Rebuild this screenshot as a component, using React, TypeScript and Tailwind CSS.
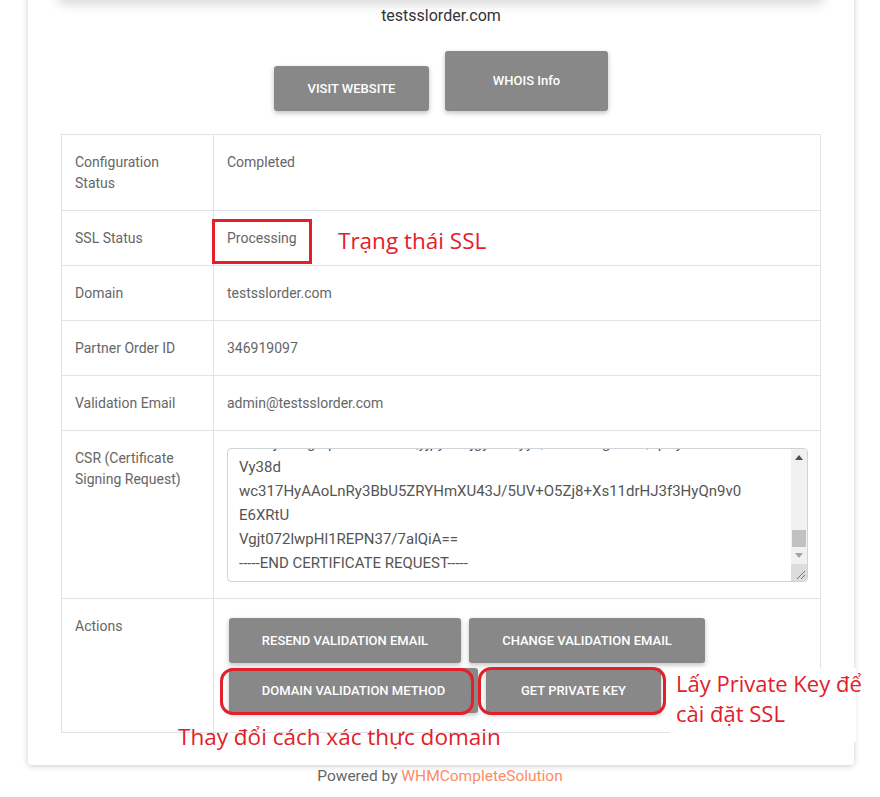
import React from 'react';

const rows: { label: string; value: string; tall?: boolean }[] = [
  { label: 'Configuration Status', value: 'Completed', tall: true },
  { label: 'SSL Status', value: 'Processing' },
  { label: 'Domain', value: 'testsslorder.com' },
  { label: 'Partner Order ID', value: '346919097' },
  { label: 'Validation Email', value: 'admin@testsslorder.com' },
];

const csrLines = [
  'MIIBIjANBgkqhkiG9w0BAQyjpyEFAjgyOCAyyQ8AMIIBCgKCAQEpAy',
  'Vy38d',
  'wc317HyAAoLnRy3BbU5ZRYHmXU43J/5UV+O5Zj8+Xs11drHJ3f3HyQn9v0',
  'E6XRtU',
  'Vgjt072lwpHl1REPN37/7alQiA==',
  '-----END CERTIFICATE REQUEST-----',
];

const GrayButton = ({ children, className = '' }: { children: React.ReactNode; className?: string }) => (
  <button className={`bg-[#888888] text-white text-[13px] font-medium uppercase rounded-[3px] shadow-[0_2px_5px_rgba(0,0,0,0.25)] ${className}`}>
    {children}
  </button>
);

const CsrBox = () => (
  <div className="flex h-[134px] border border-[#cfd4da] rounded-[4px] overflow-hidden">
    <div className="flex-1 overflow-hidden pl-[11px] text-[15px] leading-[24px] text-[#555]">
      <div className="-mt-[18px] whitespace-nowrap">
        {csrLines.map((l, i) => (
          <div key={i}>{l}</div>
        ))}
      </div>
    </div>
    <div className="w-[16px] flex flex-col bg-[#f1f1f1]">
      <div className="h-[17px] flex items-center justify-center">
        <svg width="8" height="5" viewBox="0 0 8 5"><path d="M0 5 L4 0 L8 5 Z" fill="#505050" /></svg>
      </div>
      <div className="flex-1 flex flex-col justify-end px-[1px]">
        <div className="h-[17px] bg-[#c1c1c1]" />
      </div>
      <div className="h-[17px] flex items-center justify-center">
        <svg width="8" height="5" viewBox="0 0 8 5"><path d="M0 0 L8 0 L4 5 Z" fill="#a3a3a3" /></svg>
      </div>
      <div className="h-[17px] bg-[#dcdcdc] flex items-end justify-end p-[2px]">
        <svg width="9" height="9" viewBox="0 0 9 9">
          <path d="M9 1 L1 9 M9 5 L5 9" stroke="#777" strokeWidth="1" />
        </svg>
      </div>
    </div>
  </div>
);

export default function App() {
  const red = 'border-[#e3202a]';
  const cell = 'align-top border border-[#dfe2e6] px-[13px] pt-[17px] pb-[16px]';
  return (
    <div className="relative w-[880px] min-h-[797px] bg-white font-['Roboto',sans-serif] overflow-hidden">
      <div className="mx-[28px] w-[826px] bg-white rounded-b-[4px] shadow-[0_1px_6px_rgba(0,0,0,0.2)] pb-[32px]">
        <div className="h-[20px] -mt-[20px] mx-[31px] rounded-[4px] bg-white shadow-[0_4px_12px_rgba(0,0,0,0.16)]" />
        <div className="pt-[4px] text-center text-[16px] leading-6 text-[#333]">testsslorder.com</div>
        <div className="mt-[23px] flex justify-center items-end gap-4">
          <GrayButton className="w-[155px] h-[45px]">Visit Website</GrayButton>
          <button className="w-[163px] h-[60px] bg-[#888888] text-white text-[13px] font-medium rounded-[3px] shadow-[0_2px_5px_rgba(0,0,0,0.25)]">
            WHOIS Info
          </button>
        </div>
        <table className="mt-[23px] mx-[33px] w-[760px] border-collapse text-[14px] leading-[21px] text-[#666]">
          <tbody>
            {rows.map((r) => (
              <tr key={r.label}>
                <td className={`w-[152px] ${cell}`}>
                  {r.tall ? (
                    <>
                      Configuration
                      <br />
                      Status
                    </>
                  ) : (
                    r.label
                  )}
                </td>
                <td className={cell}>{r.value}</td>
              </tr>
            ))}
            <tr>
              <td className={cell}>
                CSR (Certificate
                <br />
                Signing Request)
              </td>
              <td className="align-top border border-[#dfe2e6] pl-[13px] pr-[12px] pt-[17px] pb-[16px]">
                <CsrBox />
              </td>
            </tr>
            <tr>
              <td className={cell}>Actions</td>
              <td className="align-top border border-[#dfe2e6] px-[13px] pt-[19px] pb-[19px]">
                <div className="ml-[2px] flex flex-wrap gap-x-2 gap-y-[5px]">
                  <GrayButton className="w-[232px] h-[45px]">Resend Validation Email</GrayButton>
                  <GrayButton className="w-[236px] h-[45px]">Change Validation Email</GrayButton>
                  <GrayButton className="w-[249px] h-[45px]">Domain Validation Method</GrayButton>
                  <GrayButton className="w-[175px] h-[45px]">Get Private Key</GrayButton>
                </div>
              </td>
            </tr>
          </tbody>
        </table>
      </div>
      <div className="pt-[1px] text-center text-[15.5px] leading-[20px] text-[#666]">
        Powered by <span className="text-[#fa8c66]">WHMCompleteSolution</span>
      </div>

      {/* screenshot annotations */}
      <div className={`absolute left-[212px] top-[219px] w-[100px] h-[45px] border-[3.5px] ${red}`} />
      <div className="absolute left-[338px] top-[226px] text-[22.5px] leading-[30px] text-[#e3202a] font-['Open_Sans',sans-serif]">
        Trạng thái SSL
      </div>
      <div className={`absolute left-[220px] top-[668px] w-[254px] h-[47px] border-[3.5px] rounded-[13px] ${red}`} />
      <div className={`absolute left-[478px] top-[667px] w-[188px] h-[48px] border-[3.5px] rounded-[13px] ${red}`} />
      <div className="absolute left-[178px] top-[722px] text-[22.5px] leading-[30px] text-[#e3202a] font-['Open_Sans',sans-serif] whitespace-nowrap">
        Thay đổi cách xác thực domain
      </div>
      <div className="absolute left-[670px] top-[668px] w-[186px] h-[74px] bg-white pl-[6px] text-[22px] leading-[30px] text-[#e3202a] font-['Open_Sans',sans-serif] whitespace-nowrap">
        Lấy Private Key để
        <br />
        cài đặt SSL
      </div>
    </div>
  );
}
